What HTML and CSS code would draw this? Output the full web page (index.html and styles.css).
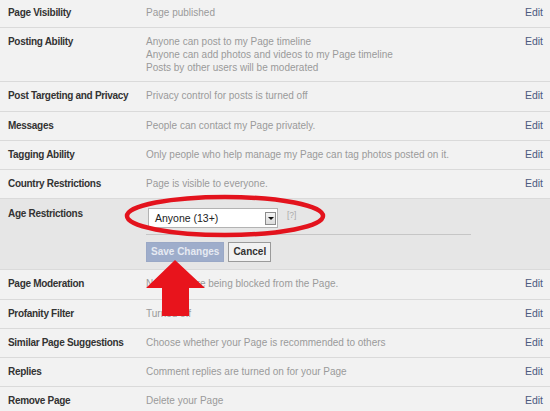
FILE: index.html
```html
<!DOCTYPE html>
<html>
<head>
<meta charset="utf-8">
<link rel="stylesheet" href="styles.css">
</head>
<body>
<div class="page">
  <div class="row first">
    <div class="label">Page Visibility</div>
    <div class="value">Page published</div>
    <a class="edit">Edit</a>
  </div>
  <div class="row multi">
    <div class="label">Posting Ability</div>
    <div class="value">Anyone can post to my Page timeline<br>Anyone can add photos and videos to my Page timeline<br>Posts by other users will be moderated</div>
    <a class="edit">Edit</a>
  </div>
  <div class="row">
    <div class="label">Post Targeting and Privacy</div>
    <div class="value">Privacy control for posts is turned off</div>
    <a class="edit">Edit</a>
  </div>
  <div class="row">
    <div class="label">Messages</div>
    <div class="value">People can contact my Page privately.</div>
    <a class="edit">Edit</a>
  </div>
  <div class="row">
    <div class="label">Tagging Ability</div>
    <div class="value">Only people who help manage my Page can tag photos posted on it.</div>
    <a class="edit">Edit</a>
  </div>
  <div class="row">
    <div class="label">Country Restrictions</div>
    <div class="value">Page is visible to everyone.</div>
    <a class="edit">Edit</a>
  </div>
  <div class="row open">
    <div class="label">Age Restrictions</div>
    <div class="editor">
      <div class="select-line">
        <div class="select">
          <span class="select-text">Anyone (13+)</span>
          <span class="select-btn"><span class="tri"></span></span>
        </div>
        <span class="help">[?]</span>
      </div>
      <div class="buttons">
        <span class="btn save">Save Changes</span>
        <span class="btn cancel">Cancel</span>
      </div>
    </div>
  </div>
  <div class="row">
    <div class="label">Page Moderation</div>
    <div class="value">No words are being blocked from the Page.</div>
    <a class="edit">Edit</a>
  </div>
  <div class="row">
    <div class="label">Profanity Filter</div>
    <div class="value">Turned off</div>
    <a class="edit">Edit</a>
  </div>
  <div class="row">
    <div class="label">Similar Page Suggestions</div>
    <div class="value">Choose whether your Page is recommended to others</div>
    <a class="edit">Edit</a>
  </div>
  <div class="row">
    <div class="label">Replies</div>
    <div class="value">Comment replies are turned on for your Page</div>
    <a class="edit">Edit</a>
  </div>
  <div class="row last">
    <div class="label">Remove Page</div>
    <div class="value">Delete your Page</div>
    <a class="edit">Edit</a>
  </div>

  <svg class="overlay" width="550" height="411" viewBox="0 0 550 411">
    <ellipse cx="225" cy="216" rx="98" ry="19" fill="none" stroke="#e3131d" stroke-width="4.5"/>
    <polygon points="175,260 205,288 189,288 189,316 162,316 162,288 146,288" fill="#e8141c"/>
  </svg>
</div>
</body>
</html>
```

FILE: styles.css
```css
html, body {
  margin: 0;
  padding: 0;
  background: #f2f2f2;
}
.page {
  position: relative;
  width: 550px;
  height: 411px;
  overflow: hidden;
  font-family: "Liberation Sans", Arial, sans-serif;
  font-size: 10px;
  line-height: 13px;
}
.row {
  display: flex;
  align-items: flex-start;
  padding: 7px 7px 8.25px 8px;
  border-bottom: 1px solid #dadada;
  background: #f2f2f2;
}
.row.first {
  margin-top: -1px;
}
.row.multi {
  padding-bottom: 7px;
}
.row.last {
  border-bottom: none;
}
.label {
  width: 138px;
  flex: none;
  font-weight: bold;
  color: #333;
  letter-spacing: -0.3px;
}
.value {
  flex: 1;
  color: #9a9a9a;
}
.edit {
  flex: none;
  color: #4c5a80;
  text-decoration: none;
  font-size: 10.5px;
}
.row.open {
  background: #e6e6e6;
  padding-top: 8px;
  padding-bottom: 7px;
}
.editor {
  display: flex;
  flex-direction: column;
}
.select-line {
  display: flex;
  align-items: flex-start;
  padding: 1px 0 6px 2px;
  width: 323px;
  border-bottom: 1px solid #c6c6c6;
}
.select {
  height: 18px;
  border: 1px solid #b3b3b3;
  background: #fff;
  display: flex;
  align-items: center;
  justify-content: space-between;
  padding-left: 6px;
  padding-right: 1px;
  box-sizing: content-box;
  width: 121px;
}
.select-text {
  color: #222;
  font-size: 10.5px;
}
.select-btn {
  width: 9px;
  height: 11px;
  border: 1px solid #8c8c8c;
  background: linear-gradient(#f4f4f4, #dcdcdc);
  display: flex;
  align-items: center;
  justify-content: center;
}
.tri {
  width: 0;
  height: 0;
  border-left: 3px solid transparent;
  border-right: 3px solid transparent;
  border-top: 3px solid #111;
}
.help {
  margin-left: 9px;
  margin-top: 1px;
  color: #aaa;
  font-size: 8.5px;
}
.buttons {
  display: flex;
  gap: 4px;
  margin-top: 7px;
}
.btn {
  height: 18px;
  line-height: 18px;
  font-weight: bold;
  font-size: 10px;
  padding: 0 4px;
  border: 1px solid;
}
.save {
  background: #9eadcb;
  border-color: #9aa8c6;
  color: #e6eaf2;
}
.cancel {
  background: #f2f2f2;
  border-color: #9a9a9a;
  color: #333;
}
.overlay {
  position: absolute;
  left: 0;
  top: 0;
  pointer-events: none;
}
```
